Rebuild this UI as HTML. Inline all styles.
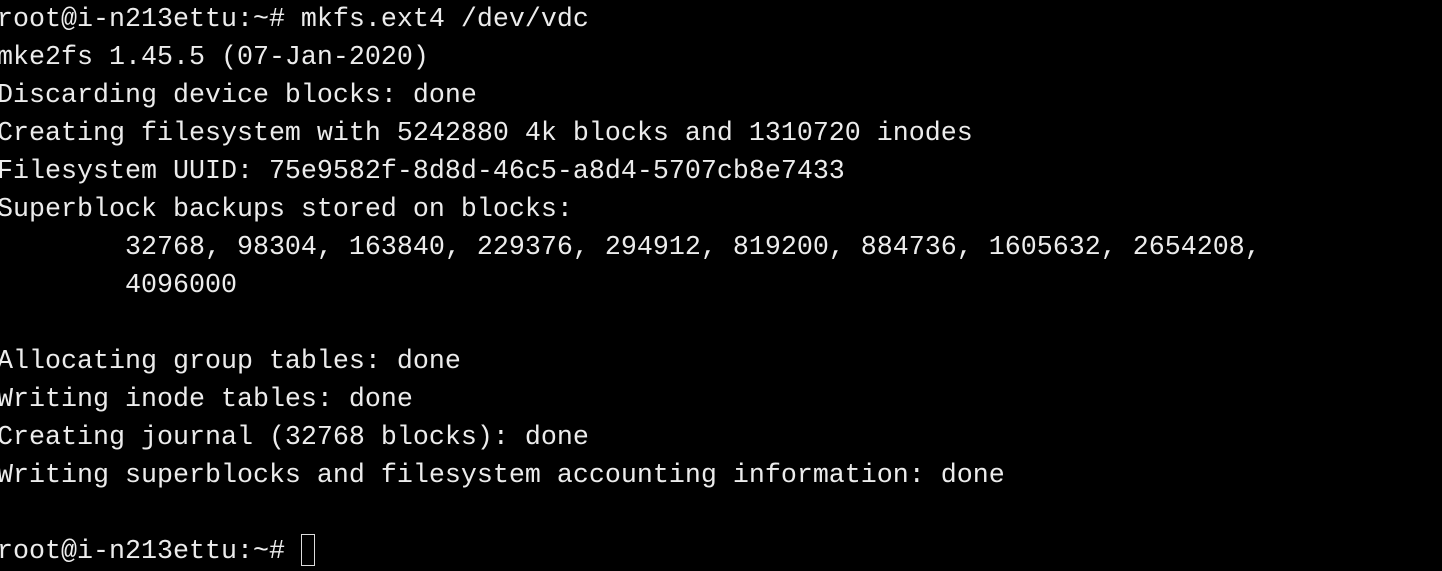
<!DOCTYPE html>
<html><head><meta charset="utf-8"><style>
html,body{margin:0;padding:0;background:#000;width:1442px;height:566px;overflow:hidden}
pre{position:absolute;left:-3px;top:1px;margin:0;font-family:"Liberation Mono",monospace;font-size:26.67px;line-height:38px;color:#ececec;white-space:pre}
.cur{display:inline-block;width:14px;height:32px;border:1.5px solid #ddd;vertical-align:-8px;box-sizing:border-box}
</style></head><body><pre>root@i-n213ettu:~# mkfs.ext4 /dev/vdc
mke2fs 1.45.5 (07-Jan-2020)
Discarding device blocks: done
Creating filesystem with 5242880 4k blocks and 1310720 inodes
Filesystem UUID: 75e9582f-8d8d-46c5-a8d4-5707cb8e7433
Superblock backups stored on blocks:
        32768, 98304, 163840, 229376, 294912, 819200, 884736, 1605632, 2654208,
        4096000

Allocating group tables: done
Writing inode tables: done
Creating journal (32768 blocks): done
Writing superblocks and filesystem accounting information: done

root@i-n213ettu:~# <span class="cur"></span></pre></body></html>
